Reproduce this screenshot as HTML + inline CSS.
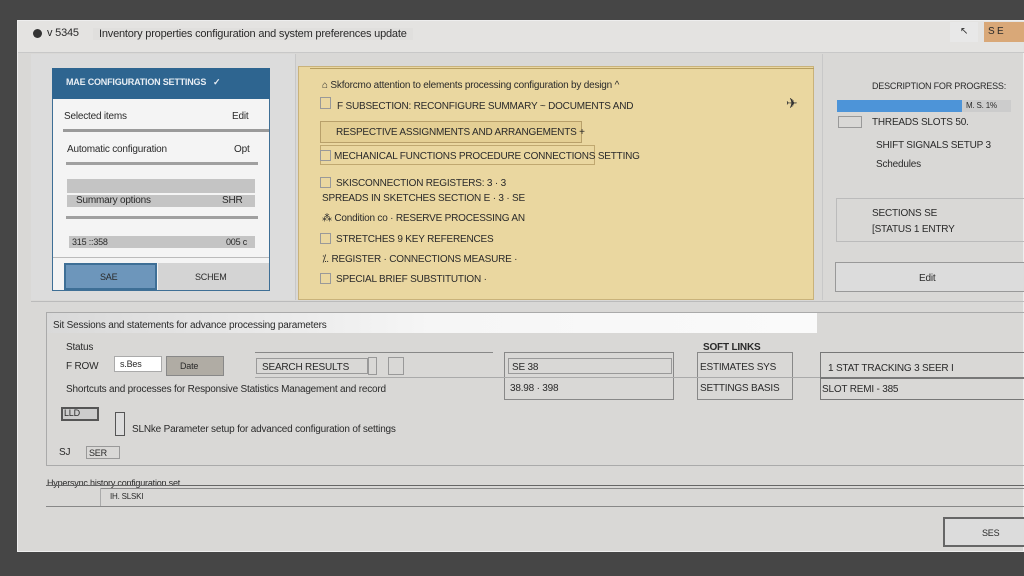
<!DOCTYPE html>
<html><head><meta charset="utf-8"><style>
*{margin:0;padding:0;box-sizing:border-box}
body{width:1024px;height:576px;background:#464646;position:relative;overflow:hidden;font-family:"Liberation Sans",sans-serif;font-size:10px;color:#333}
.a{position:absolute}
.win{left:17px;top:20px;width:1007px;height:532px;background:#d9d8d6;border:1px solid #eee}
.t{position:absolute;white-space:nowrap;font-size:10px;color:#2a2a2a;letter-spacing:-.2px}
.b{border:1px solid #999}
</style></head><body>
<div class="a win"></div>
<div class="a" style="left:18px;top:21px;width:1006px;height:32px;background:#e4e3e1;border-bottom:1px solid #c8c8c8"></div>
<div class="a" style="left:33px;top:29px;width:9px;height:9px;border-radius:50%;background:#333"></div>
<div class="t" style="left:47px;top:27px;font-size:11px">v 5345</div>
<div class="t" style="left:93px;top:28px;font-size:11px;background:#e0dfdd;padding:0 6px">Inventory properties configuration and system preferences update</div>
<div class="a" style="left:950px;top:22px;width:28px;height:20px;background:#e8e8e8"></div>
<div class="t" style="left:960px;top:26px">↖</div>
<div class="a" style="left:984px;top:22px;width:40px;height:20px;background:#d9a878"></div>
<div class="t" style="left:988px;top:26px">S   E</div>
<div class="a" style="left:31px;top:54px;width:265px;height:246px;background:#dcdcdc;border-right:1px solid #c8c8c8"></div>
<div class="a" style="left:52px;top:68px;width:218px;height:223px;background:#f4f4f4;border:1px solid #3e6f96"></div>
<div class="a" style="left:52px;top:68px;width:218px;height:31px;background:#2e6590"></div>
<div class="t" style="left:66px;top:77px;color:#e8eef4;font-size:9px;font-weight:bold">MAE CONFIGURATION SETTINGS &nbsp; ✓</div>
<div class="t" style="left:64px;top:111px">Selected items</div><div class="t" style="left:232px;top:111px">Edit</div>
<div class="a" style="left:63px;top:129px;width:206px;height:3px;background:#9a9a9a"></div>
<div class="t" style="left:67px;top:144px">Automatic configuration</div><div class="t" style="left:234px;top:144px">Opt</div>
<div class="a" style="left:66px;top:162px;width:192px;height:3px;background:#a0a0a0"></div>
<div class="a" style="left:67px;top:179px;width:188px;height:14px;background:#c4c4c4"></div>
<div class="a" style="left:67px;top:195px;width:188px;height:12px;background:#c4c4c4"></div>
<div class="t" style="left:76px;top:195px">Summary options</div><div class="t" style="left:222px;top:195px">SHR</div>
<div class="a" style="left:66px;top:216px;width:192px;height:3px;background:#a0a0a0"></div>
<div class="a" style="left:69px;top:236px;width:186px;height:12px;background:#c4c4c4"></div>
<div class="t" style="left:72px;top:237px;font-size:9px">315 ::358</div><div class="t" style="left:226px;top:237px;font-size:9px">005 c</div>
<div class="a" style="left:53px;top:257px;width:216px;height:1px;background:#bbb"></div>
<div class="a" style="left:64px;top:263px;width:93px;height:27px;background:#6d96bb;border:2px solid #3e6f96"></div>
<div class="t" style="left:100px;top:272px;font-size:9px">SAE</div>
<div class="a" style="left:158px;top:263px;width:111px;height:27px;background:#d4d4d4"></div>
<div class="t" style="left:195px;top:272px;font-size:9px">SCHEM</div>
<div class="a" style="left:298px;top:66px;width:516px;height:234px;background:#ead7a0;border:1px solid #c9b27a"></div>
<div class="a" style="left:310px;top:68px;width:504px;height:1px;background:#b69e60"></div>
<div class="t" style="left:322px;top:80px">⌂ Skforcmo attention to elements processing configuration by design ^</div>
<div class="a b" style="left:320px;top:97px;width:11px;height:12px"></div>
<div class="t" style="left:337px;top:101px">F SUBSECTION: RECONFIGURE SUMMARY ~ DOCUMENTS AND</div>
<div class="a" style="left:320px;top:121px;width:262px;height:22px;background:#e4cf94;border:1px solid #b8a06a"></div>
<div class="t" style="left:336px;top:127px">RESPECTIVE ASSIGNMENTS AND ARRANGEMENTS +</div>
<div class="a" style="left:320px;top:145px;width:275px;height:20px;border:1px solid #c0a870"></div>
<div class="a b" style="left:320px;top:150px;width:11px;height:11px"></div>
<div class="t" style="left:334px;top:151px">MECHANICAL FUNCTIONS PROCEDURE CONNECTIONS SETTING</div>
<div class="a b" style="left:320px;top:177px;width:11px;height:11px"></div>
<div class="t" style="left:336px;top:178px">SKISCONNECTION REGISTERS: 3 · 3</div>
<div class="t" style="left:322px;top:193px">SPREADS IN SKETCHES SECTION E · 3 · SE</div>
<div class="t" style="left:322px;top:213px">⁂ Condition co · RESERVE PROCESSING AN</div>
<div class="a b" style="left:320px;top:233px;width:11px;height:11px"></div>
<div class="t" style="left:336px;top:234px">STRETCHES 9 KEY REFERENCES</div>
<div class="t" style="left:322px;top:254px">⁒. REGISTER · CONNECTIONS MEASURE ·</div>
<div class="a b" style="left:320px;top:273px;width:11px;height:11px"></div>
<div class="t" style="left:336px;top:274px">SPECIAL BRIEF SUBSTITUTION ·</div>
<div class="t" style="left:786px;top:95px;font-size:14px;color:#333">✈</div>
<div class="a" style="left:822px;top:54px;width:202px;height:246px;border-left:1px solid #c8c8c8"></div>
<div class="t" style="left:872px;top:81px;font-size:9px">DESCRIPTION FOR PROGRESS:</div>
<div class="a" style="left:837px;top:100px;width:174px;height:12px;background:#ccc"></div>
<div class="a" style="left:837px;top:100px;width:125px;height:12px;background:#4d94d8"></div>
<div class="t" style="left:966px;top:101px;font-size:8px">M. S. 1%</div>
<div class="a b" style="left:838px;top:116px;width:24px;height:12px"></div>
<div class="t" style="left:872px;top:117px">THREADS SLOTS 50.</div>
<div class="t" style="left:876px;top:140px">SHIFT SIGNALS SETUP 3</div>
<div class="t" style="left:876px;top:159px">Schedules</div>
<div class="a" style="left:836px;top:198px;width:188px;height:44px;border:1px solid #bbb;border-right:none"></div>
<div class="t" style="left:872px;top:208px">SECTIONS SE</div>
<div class="t" style="left:872px;top:224px">[STATUS 1 ENTRY</div>
<div class="a" style="left:835px;top:262px;width:189px;height:30px;border:1px solid #999;border-right:none;background:#dcdcdc"></div>
<div class="t" style="left:919px;top:273px">Edit</div>
<div class="a" style="left:31px;top:301px;width:993px;height:1px;background:#bbb"></div>
<div class="a" style="left:46px;top:312px;width:978px;height:154px;border:1px solid #aaa;border-right:none"></div>
<div class="a" style="left:47px;top:313px;width:770px;height:20px;background:linear-gradient(90deg,#d9d9d9,#f6f6f6 50%,#fafafa)"></div>
<div class="t" style="left:53px;top:320px">Sit Sessions and statements for advance processing parameters</div>
<div class="t" style="left:66px;top:342px">Status</div>
<div class="t" style="left:66px;top:361px">F ROW</div>
<div class="a" style="left:114px;top:356px;width:48px;height:16px;background:#fff;border:1px solid #aaa"></div>
<div class="t" style="left:120px;top:359px;font-size:9px">s.Bes</div>
<div class="a" style="left:166px;top:356px;width:58px;height:20px;background:#b0aca4;border:1px solid #888"></div>
<div class="t" style="left:180px;top:361px;font-size:9px">Date</div>
<div class="a" style="left:255px;top:352px;width:238px;height:1px;background:#888"></div>
<div class="a" style="left:256px;top:358px;width:112px;height:16px;border:1px solid #999"></div>
<div class="t" style="left:262px;top:362px">SEARCH RESULTS</div>
<div class="a b" style="left:368px;top:357px;width:9px;height:18px"></div>
<div class="a b" style="left:388px;top:357px;width:16px;height:18px"></div>
<div class="a" style="left:504px;top:352px;width:170px;height:48px;border:1px solid #888"></div>
<div class="a" style="left:508px;top:358px;width:164px;height:16px;border:1px solid #999"></div>
<div class="t" style="left:512px;top:362px">SE 38</div>
<div class="t" style="left:510px;top:383px">38.98 · 398</div>
<div class="t" style="left:703px;top:342px;font-weight:bold">SOFT LINKS</div>
<div class="a" style="left:697px;top:352px;width:96px;height:48px;border:1px solid #888"></div>
<div class="t" style="left:700px;top:362px">ESTIMATES SYS</div>
<div class="t" style="left:700px;top:383px">SETTINGS BASIS</div>
<div class="a" style="left:820px;top:352px;width:204px;height:48px;border:1px solid #777;border-right:none"></div>
<div class="a" style="left:820px;top:377px;width:204px;height:2px;background:#777"></div>
<div class="t" style="left:828px;top:363px">1 STAT TRACKING 3 SEER I</div>
<div class="t" style="left:822px;top:384px">SLOT REMI - 385</div>
<div class="a" style="left:255px;top:377px;width:565px;height:1px;background:#aaa"></div>
<div class="t" style="left:66px;top:384px">Shortcuts and processes for Responsive Statistics Management and record</div>
<div class="a" style="left:61px;top:407px;width:38px;height:14px;border:2px solid #555;background:#ccc"></div>
<div class="t" style="left:64px;top:408px;font-size:9px">LLD</div>
<div class="a" style="left:115px;top:412px;width:10px;height:24px;border:1px solid #555;background:#ddd"></div>
<div class="t" style="left:132px;top:424px">SLNke Parameter setup for advanced configuration of settings</div>
<div class="t" style="left:59px;top:447px">SJ</div>
<div class="a b" style="left:86px;top:446px;width:34px;height:13px"></div>
<div class="t" style="left:89px;top:448px;font-size:9px">SER</div>
<div class="t" style="left:47px;top:478px;font-size:9px">Hypersync history configuration set</div>
<div class="a" style="left:46px;top:485px;width:978px;height:1px;background:#666"></div>
<div class="a" style="left:100px;top:488px;width:924px;height:1px;background:#888"></div>
<div class="a" style="left:100px;top:488px;width:1px;height:18px;background:#aaa"></div>
<div class="t" style="left:110px;top:492px;font-size:8px">IH. SLSKI</div>
<div class="a" style="left:46px;top:506px;width:978px;height:1px;background:#888"></div>
<div class="a" style="left:943px;top:517px;width:81px;height:30px;border:2px solid #666;border-right:none;background:#dcdcdc"></div>
<div class="t" style="left:982px;top:528px;font-size:9px">SES</div>
</body></html>
